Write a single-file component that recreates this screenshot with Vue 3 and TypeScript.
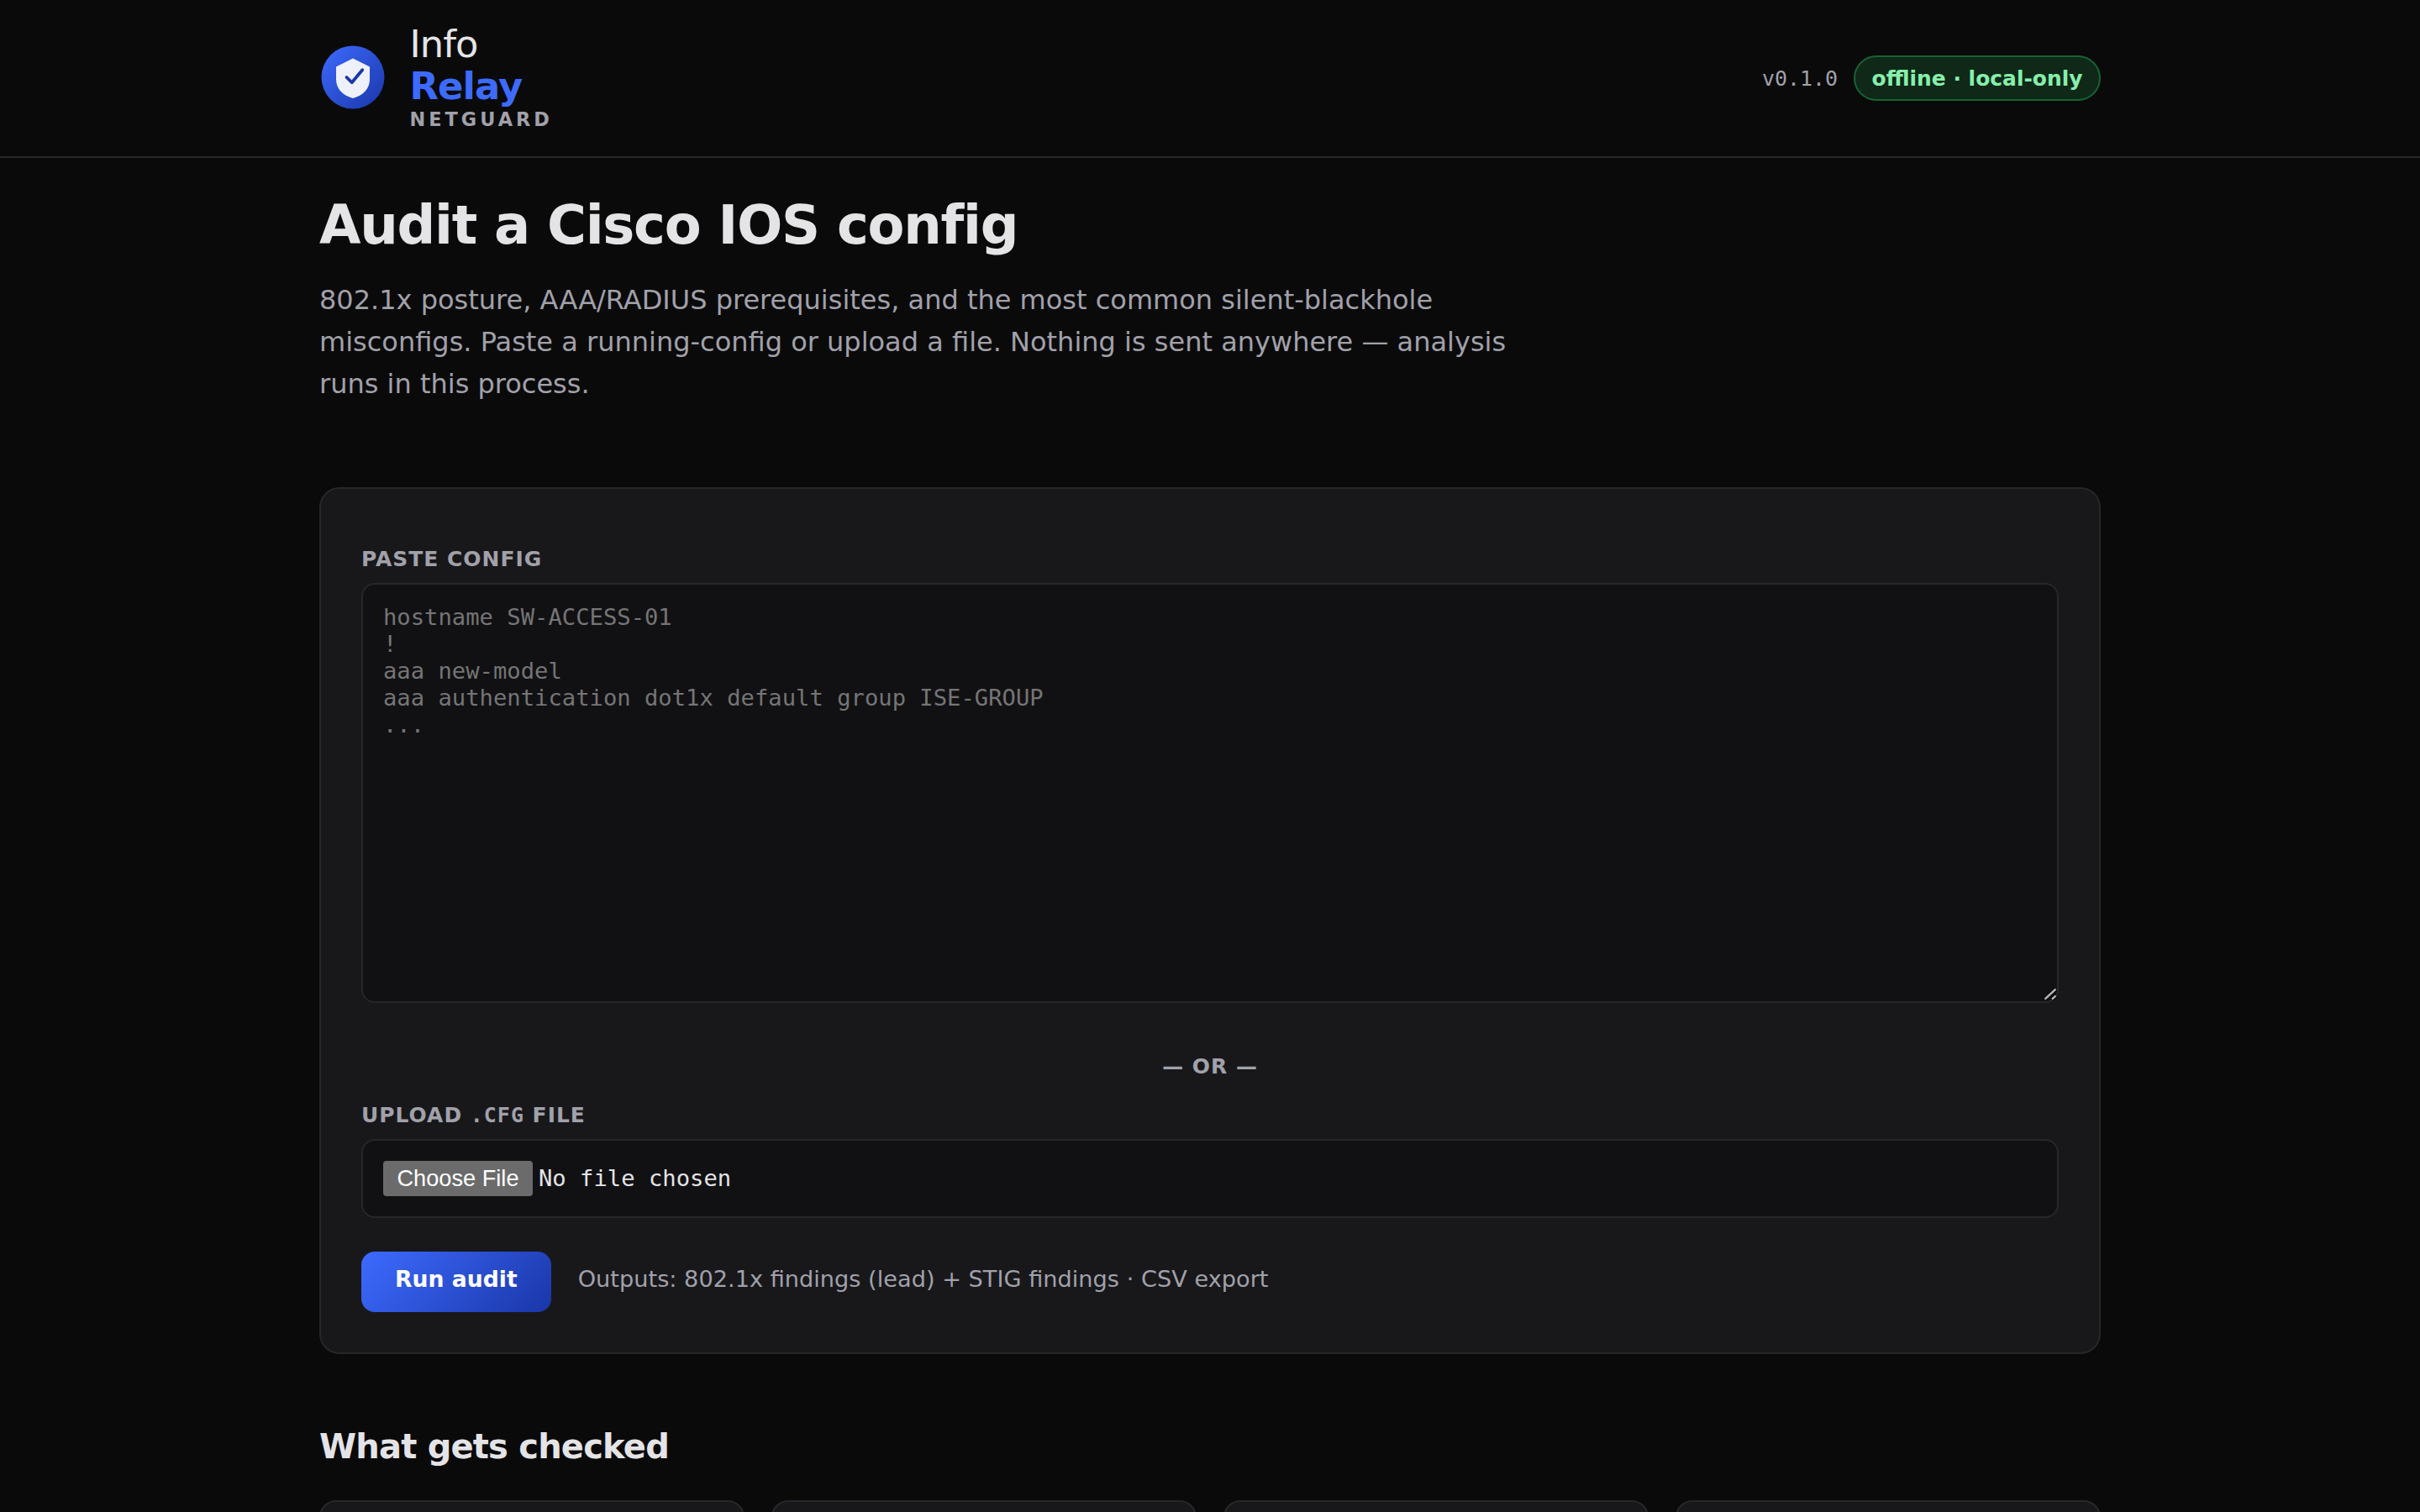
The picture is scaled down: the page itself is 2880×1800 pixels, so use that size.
<script setup lang="ts">
import { ref } from 'vue'

const version = 'v0.1.0'
const config = ref('')
const placeholder = [
  'hostname SW-ACCESS-01',
  '!',
  'aaa new-model',
  'aaa authentication dot1x default group ISE-GROUP',
  '...',
].join('\n')
const checkCards = [1, 2, 3, 4]
</script>

<template>
  <div class="page">
    <header class="topbar">
      <div class="wrap topbar-inner">
        <div class="brand">
          <svg class="logo" viewBox="0 0 64 64" aria-hidden="true">
            <defs>
              <linearGradient id="logo-fill" x1="0" y1="0" x2="1" y2="1">
                <stop offset="0" stop-color="#3d6bff" />
                <stop offset="1" stop-color="#1a36a8" />
              </linearGradient>
            </defs>
            <circle cx="32" cy="32" r="30" fill="url(#logo-fill)" />
            <path d="M32 14 L48 22 V34 C48 43 41.5 49.5 32 52 C22.5 49.5 16 43 16 34 V22 Z" fill="#fff" fill-opacity="0.92" />
            <path d="M26 32 L31 37 L41 25" fill="none" stroke="#1a36a8" stroke-width="3" stroke-linecap="round" stroke-linejoin="round" />
          </svg>
          <div class="brand-text">
            <span class="brand-info">Info</span>
            <span class="brand-relay">Relay</span>
            <span class="brand-sub">NETGUARD</span>
          </div>
        </div>
        <div class="meta">
          <span class="version">{{ version }}</span>
          <span class="pill">offline · local-only</span>
        </div>
      </div>
    </header>

    <main class="wrap">
      <section class="hero">
        <h1>Audit a Cisco IOS config</h1>
        <p>
          802.1x posture, AAA/RADIUS prerequisites, and the most common silent-blackhole misconfigs.
          Paste a running-config or upload a file. Nothing is sent anywhere — analysis runs in this process.
        </p>
      </section>

      <form class="card" @submit.prevent>
        <label class="label" for="config">PASTE CONFIG</label>
        <div class="area">
          <textarea id="config" v-model="config" :placeholder="placeholder" spellcheck="false"></textarea>
          <svg class="grip" viewBox="0 0 18 18" aria-hidden="true">
            <path d="M3.5 15.5 L16.5 3.5 M12 15.5 L16.5 11.5" stroke="#000" stroke-width="5" />
            <path d="M3.5 15.5 L16.5 3.5 M12 15.5 L16.5 11.5" stroke="#b0b0b0" stroke-width="2.4" />
          </svg>
        </div>
        <div class="or">— OR —</div>
        <label class="label" for="file">UPLOAD <code>.CFG</code> FILE</label>
        <input id="file" class="file" type="file" />
        <div class="actions">
          <button class="run" type="submit">Run audit</button>
          <span class="hint">Outputs: 802.1x findings (lead) + STIG findings · CSV export</span>
        </div>
      </form>

      <h2>What gets checked</h2>
      <div class="grid">
        <div v-for="c in checkCards" :key="c" class="tile"></div>
      </div>
    </main>
  </div>
</template>

<style>
body {
  background: #0a0a0a;
}
</style>

<style scoped>
.page {
  height: 1800px;
  overflow: hidden;
  background: #0a0a0a;
  color: #e4e4e7;
  font-family: 'DejaVu Sans', sans-serif;
  font-size: 32px;
  line-height: 50px;
}
.wrap {
  width: 2120px;
  margin: 0 auto;
}
.topbar {
  height: 188px;
  box-sizing: border-box;
  border-bottom: 2px solid #27272a;
}
.topbar-inner {
  display: flex;
  align-items: center;
  justify-content: space-between;
  height: 186px;
}
.brand {
  display: flex;
  align-items: center;
  gap: 27.4px;
}
.logo {
  display: block;
  width: 80px;
  height: 80px;
  margin-bottom: 2px;
}
.brand-text {
  display: flex;
  flex-direction: column;
  padding-bottom: 2px;
  font-size: 44.8px;
  letter-spacing: -0.02em;
  line-height: 50px;
}
.brand-relay {
  color: #3d6bff;
  font-weight: 700;
}
.brand-sub {
  color: #a1a1aa;
  font-size: 22.4px;
  font-weight: 600;
  letter-spacing: 0.18em;
  line-height: 28px;
}
.meta {
  display: flex;
  align-items: center;
  gap: 19px;
}
.version {
  padding-top: 1px;
  color: #a1a1aa;
  font-family: 'DejaVu Sans Mono', monospace;
  font-size: 24.96px;
  line-height: 51px;
}
.pill {
  box-sizing: border-box;
  height: 54px;
  padding: 0 19.45px;
  border: 2px solid #166534;
  border-radius: 27px;
  background: #0f2818;
  color: #86efac;
  font-size: 24.96px;
  font-weight: 600;
  line-height: 51px;
}
.hero {
  padding-top: 40px;
}
h1 {
  margin: 0;
  font-size: 64px;
  font-weight: 700;
  letter-spacing: -0.02em;
  line-height: 80px;
}
.hero p {
  width: 1440px;
  margin: 24px 0 0;
  color: #a1a1aa;
}
.card {
  box-sizing: border-box;
  height: 1032px;
  margin-top: 98px;
  padding: 58px 48px 0;
  border: 2px solid #27272a;
  border-radius: 24px;
  background: #18181b;
}
.label {
  display: block;
  height: 54px;
  color: #a1a1aa;
  font-size: 24.96px;
  font-weight: 600;
  letter-spacing: 0.04em;
  line-height: 51px;
}
.label code {
  font-family: 'DejaVu Sans Mono', monospace;
  font-size: 24.96px;
}
.area {
  position: relative;
  height: 500px;
}
textarea {
  display: block;
  box-sizing: border-box;
  width: 100%;
  height: 500px;
  padding: 23px 24px;
  border: 2px solid #27272a;
  border-radius: 16px;
  outline: none;
  background: #111113;
  color: #e4e4e7;
  font: 27.2px/32px 'DejaVu Sans Mono', monospace;
  resize: none;
}
textarea::placeholder {
  color: #757575;
}
.grip {
  position: absolute;
  right: 2px;
  bottom: 2px;
  width: 18px;
  height: 18px;
}
.or {
  margin: 50px 0 7px;
  color: #a1a1aa;
  font-size: 24.96px;
  font-weight: 600;
  letter-spacing: 0.04em;
  line-height: 51px;
  text-align: center;
}
.file {
  display: block;
  box-sizing: border-box;
  width: 100%;
  height: 94px;
  padding: 24px;
  border: 2px solid #27272a;
  border-radius: 16px;
  background: #111113;
  color: #e4e4e7;
  font: 27.2px/42px 'DejaVu Sans Mono', monospace;
}
.file::file-selector-button {
  box-sizing: border-box;
  width: 178px;
  height: 42px;
  margin: 0 7px 0 0;
  padding: 0;
  border: 0;
  border-radius: 4px;
  background: #6b6b6b;
  color: #fff;
  font: 27.2px/42px 'Liberation Sans', Arial, sans-serif;
}
.actions {
  display: flex;
  gap: 32px;
  margin-top: 40px;
}
.run {
  height: 72px;
  padding: 0 40px 7px;
  border: 0;
  border-radius: 16px;
  background: linear-gradient(135deg, #3d6bff, #1a36a8);
  color: #fff;
  font: 600 26.667px/65px 'DejaVu Sans', sans-serif;
}
.hint {
  color: #a1a1aa;
  font-size: 27.2px;
  line-height: 65px;
}
h2 {
  margin: 84px 0 38px;
  font-size: 40px;
  font-weight: 700;
  letter-spacing: -0.02em;
  line-height: 52px;
}
.grid {
  display: grid;
  grid-template-columns: repeat(4, 1fr);
  gap: 32px;
}
.tile {
  height: 240px;
  box-sizing: border-box;
  border: 2px solid #27272a;
  border-radius: 20px;
  background: #18181b;
}
</style>
